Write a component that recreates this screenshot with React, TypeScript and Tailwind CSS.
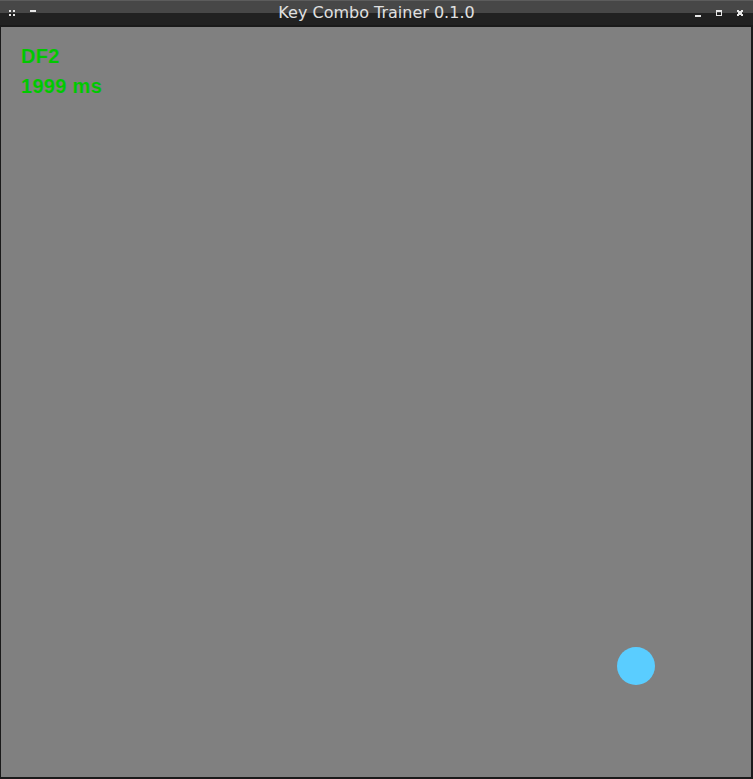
import React from "react";

export default function App() {
  return (
    <div className="w-[753px] h-[779px] bg-[#1a1a1a] flex flex-col overflow-hidden">
      <div className="relative h-[27px] flex-none">
        <div className="absolute inset-0 flex flex-col">
          <div className="h-[1px] bg-[#5c5c5c]" />
          <div className="h-[12px] bg-[#474747]" />
          <div className="h-[12px] bg-[#212121]" />
          <div className="h-[2px] bg-[#1a1a1a]" />
        </div>
        <div
          className="absolute left-0 right-0 top-0 h-[25px] text-center text-[16px] leading-[25px] text-[#e0e0e0]"
          style={{ fontFamily: '"DejaVu Sans", sans-serif' }}
        >
          Key Combo Trainer 0.1.0
        </div>
        <div className="relative h-[25px] flex items-center">
          <div className="w-[9px]" />
          <div className="grid grid-cols-2 gap-[2px] w-[6px]">
            <div className="w-[2px] h-[2px] bg-[#e6e6e6]" />
            <div className="w-[2px] h-[2px] bg-[#e6e6e6]" />
            <div className="w-[2px] h-[2px] bg-[#e6e6e6]" />
            <div className="w-[2px] h-[2px] bg-[#e6e6e6]" />
          </div>
          <div className="ml-[15px] w-[6px] h-[2px] bg-[#e6e6e6] mb-[4px]" />
          <div className="flex-1" />
          <div className="flex items-center">
            <div className="w-[6px] h-[2px] bg-[#e6e6e6] mt-[6px]" />
            <div className="ml-[15px] w-[6px] h-[6px] border border-[#e6e6e6] border-t-2 box-border" />
            <svg className="ml-[15px]" width="6" height="6" viewBox="0 0 6 6">
              <path d="M0 0h2v1h2v-1h2v2h-1v2h1v2h-2v-1h-2v1h-2v-2h1v-2h-1z" fill="#e6e6e6" />
            </svg>
            <div className="w-[10px]" />
          </div>
        </div>
      </div>
      <div className="relative flex-1 ml-[1px] mr-[2px] mb-[2px] bg-[#808080] pt-[14px] pl-[20px]">
        <div
          className="font-bold text-[20px] leading-[30px] tracking-[0.3px] text-[#00c800]"
          style={{ fontFamily: '"Liberation Sans", Arial, sans-serif' }}
        >
          <div>DF2</div>
          <div>1999 ms</div>
        </div>
        <div className="absolute left-[616px] top-[620px] w-[38px] h-[38px] rounded-full bg-[#5acdff]" />
      </div>
    </div>
  );
}
